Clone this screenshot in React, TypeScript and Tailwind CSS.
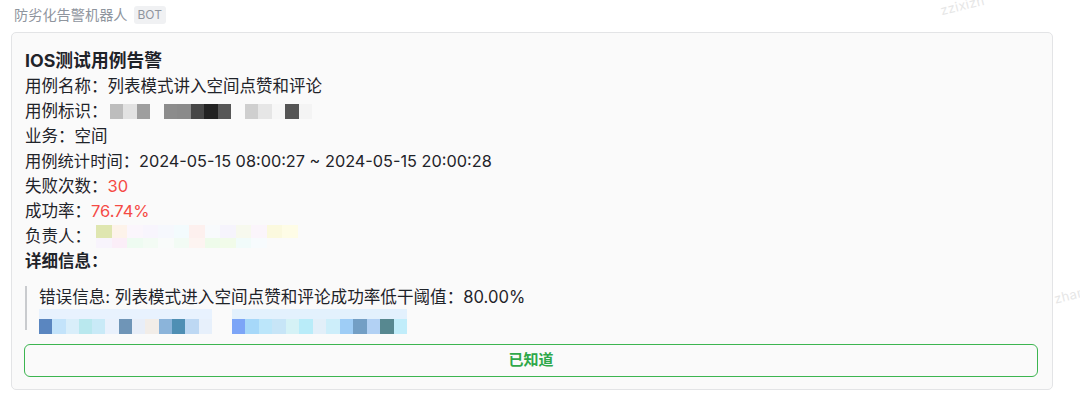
import React from "react";

const idCells = [
  "#bdbdbd", "#e2e2e2", "#9e9e9e", "#fafafa", "#8c8c8c", "#8a8a8a", "#474747",
  "#232323", "#575757", "#fafafa", "#cfcfcf", "#e6e6e6", "#f7f7f7", "#555555", "#f4f4f4",
];

const ownerTop = [
  "#dfe6b0", "#fdf3ea", "#fbf6fc", "#f8f5fd", "#f6f8fd", "#f3fbfd", "#fdf0ee",
  "#f8fafc", "#f6f4fc", "#f7f9ee", "#fbf5fb", "#fbf9de", "#fefce6",
];
const ownerBottom = [
  "#f8f4fc", "#fbeef8", "#eefbf1", "#f3fbf4", "#f9fbfa", "#f2fbf4", "#fdf4f1",
  "#eefbea", "#f1fbe9", "#f1fbfa", "#f7fbfd", "#fafafa", "#fafafa",
];

const linkA = [
  "#5a86c0", "#c3e3fa", "#d9eefa", "#b9e8ee", "#c9eaf7", "#e9f1fc", "#6f95b7",
  "#e8eef8", "#f2ede8", "#8bb4da", "#4f8fb4", "#bdd8f3", "#e7f0fb",
];
const linkB = [
  "#7ca5f7", "#a6d8f9", "#bce6fa", "#c7e5f7", "#d5f2f6", "#b9ecf9", "#e2eff9",
  "#cdeefa", "#9ecdf6", "#739fc5", "#b2d1f4", "#578890", "#c1edfa",
];

function Row({ children }: { children: React.ReactNode }) {
  return <div className="h-[25px] leading-[25px] whitespace-nowrap">{children}</div>;
}

// mosaic blocks standing in for blurred-out values
function Cells({ colors, w }: { colors: string[]; w: string }) {
  return (
    <div className="flex h-full">
      {colors.map((c, i) => (
        <div key={i} className={`${w} h-full`} style={{ backgroundColor: c }} />
      ))}
    </div>
  );
}

export default function App() {
  return (
    <div
      className="relative w-[1080px] h-[411px] bg-white overflow-hidden text-[#1f2329]"
      style={{ fontFamily: 'Inter, "Noto Sans CJK SC", sans-serif' }}
    >
      {/* watermarks */}
      <div className="absolute left-[940px] top-[-4px] -rotate-[14deg] text-[13px] text-[#e6e6e6] tracking-wide">
        zzixizh
      </div>
      <div className="absolute left-[1054px] top-[286px] -rotate-[14deg] text-[13px] text-[#e6e6e6] tracking-wide">
        zhan
      </div>

      {/* sender */}
      <div className="flex items-center h-[30px] pl-[14px] gap-[6px]">
        <span className="text-[14.2px] text-[#8f959e]">防劣化告警机器人</span>
        <span className="h-[18px] px-[4px] rounded-[3px] bg-[#f0f1f3] text-[12px] leading-[18px] text-[#8f959e]">
          BOT
        </span>
      </div>

      {/* card */}
      <div className="ml-[11px] mt-[2px] w-[1042px] rounded-[5px] border border-[#e3e4e6] bg-[#fafafa] pt-[14px] pl-[13px] pr-[13px] pb-[12px]">
        <div className="h-[27px] leading-[27px] text-[17.8px] font-bold">IOS测试用例告警</div>
        <div className="text-[16.5px]">
          <Row>用例名称：列表模式讲入空间点赞和评论</Row>
          <div className="flex items-center h-[25px]">
            <span>用例标识：</span>
            <div className="h-[15px] ml-[2px]">
              <Cells colors={idCells} w="w-[13.5px]" />
            </div>
          </div>
          <Row>业务：空间</Row>
          <Row>
            <span className="text-[16.3px]">用例统计时间：2024-05-15 08:00:27 ~ 2024-05-15 20:00:28</span>
          </Row>
          <Row>
            失败次数：<span className="text-[#f54a45]">30</span>
          </Row>
          <Row>
            成功率：<span className="text-[#f54a45]">76.74%</span>
          </Row>
          <div className="flex items-center h-[25px]">
            <span>负责人：</span>
            <div className="flex flex-col ml-[5px]">
              <div className="h-[13px]">
                <Cells colors={ownerTop} w="w-[15.5px]" />
              </div>
              <div className="h-[10px]">
                <Cells colors={ownerBottom} w="w-[15.5px]" />
              </div>
            </div>
          </div>
          <Row>
            <span className="font-bold">详细信息：</span>
          </Row>
        </div>

        {/* quote */}
        <div className="flex mt-[12px]">
          <div className="w-[2px] h-[44px] bg-[#c9cbce]" />
          <div className="pl-[12px] text-[16.6px]">
            <div className="h-[23px] leading-[23px] whitespace-nowrap">
              错误信息: 列表模式进入空间点赞和评论成功率低干阈值：80.00%
            </div>
            <div className="flex gap-[20px]">
              <div className="flex flex-col">
                <div className="h-[10px] bg-[#e8f2fe]" />
                <div className="h-[15px]">
                  <Cells colors={linkA} w="w-[13.3px]" />
                </div>
              </div>
              <div className="flex flex-col">
                <div className="h-[10px] bg-[#e3f1fd]" />
                <div className="h-[15px]">
                  <Cells colors={linkB} w="w-[13.5px]" />
                </div>
              </div>
            </div>
          </div>
        </div>

        {/* button */}
        <button className="mt-[10px] ml-[-1px] w-[1014px] h-[33px] rounded-[6px] border border-[#3cb550] bg-[#fafafa] text-[15px] font-bold text-[#2fa84a]">
          已知道
        </button>
      </div>
    </div>
  );
}
